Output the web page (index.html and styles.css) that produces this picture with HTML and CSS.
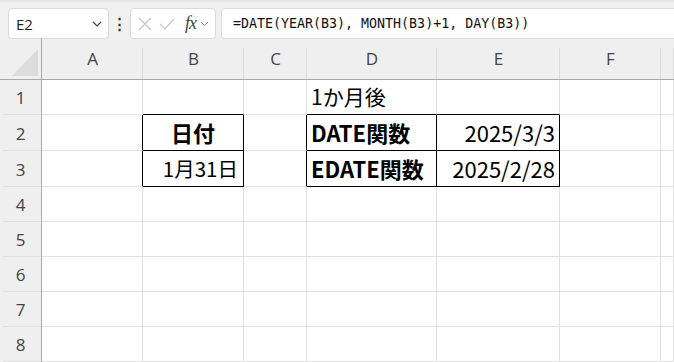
FILE: index.html
```html
<!DOCTYPE html>
<html lang="ja">
<head>
    <meta charset="UTF-8">
    <title>1か月後 - Excel</title>
    <link rel="stylesheet" href="styles.css">
</head>
<body>

    <!-- barra de fórmulas -->
    <div class="barra">
        <div class="nome">
            <span>E2</span>
            <svg class="seta" width="10" height="6" viewBox="0 0 10 6"><path d="M1 1 L5 5 L9 1" fill="none" stroke="#444" stroke-width="1.2"/></svg>
        </div>
        <div class="pontos">&#8942;</div>
        <div class="fx-caixa">
            <svg width="14" height="14" viewBox="0 0 14 14"><path d="M1 1 L13 13 M13 1 L1 13" stroke="#c4c4c4" stroke-width="1.2"/></svg>
            <svg width="16" height="12" viewBox="0 0 16 12"><path d="M1 6 L6 11 L15 1" fill="none" stroke="#c4c4c4" stroke-width="1.2"/></svg>
            <span class="fx">fx</span>
            <svg class="seta" width="9" height="6" viewBox="0 0 9 6"><path d="M1 1 L4.5 4.5 L8 1" fill="none" stroke="#888" stroke-width="1"/></svg>
        </div>
        <div class="formula">=DATE(YEAR(B3), MONTH(B3)+1, DAY(B3))</div>
    </div>

    <!-- planilha -->
    <div class="grade">
        <div class="canto"><div class="triangulo"></div></div>
        <div class="col">A</div>
        <div class="col">B</div>
        <div class="col">C</div>
        <div class="col">D</div>
        <div class="col">E</div>
        <div class="col">F</div>
        <div class="col"></div>

        <div class="lin">1</div>
        <div class="cel"></div>
        <div class="cel bb-k"></div>
        <div class="cel"></div>
        <div class="cel bb-k">1か月後</div>
        <div class="cel bb-k"></div>
        <div class="cel"></div>
        <div class="cel"></div>

        <div class="lin">2</div>
        <div class="cel br-k"></div>
        <div class="cel br-k bb-k negrito centro">日付</div>
        <div class="cel br-k"></div>
        <div class="cel br-k bb-k negrito">DATE関数</div>
        <div class="cel br-k bb-k direita">2025/3/3</div>
        <div class="cel"></div>
        <div class="cel"></div>

        <div class="lin">3</div>
        <div class="cel br-k"></div>
        <div class="cel br-k bb-k direita data">1月31日</div>
        <div class="cel br-k"></div>
        <div class="cel br-k bb-k negrito">EDATE関数</div>
        <div class="cel br-k bb-k direita">2025/2/28</div>
        <div class="cel"></div>
        <div class="cel"></div>

        <div class="lin">4</div>
        <div class="cel"></div><div class="cel"></div><div class="cel"></div><div class="cel"></div><div class="cel"></div><div class="cel"></div><div class="cel"></div>
        <div class="lin">5</div>
        <div class="cel"></div><div class="cel"></div><div class="cel"></div><div class="cel"></div><div class="cel"></div><div class="cel"></div><div class="cel"></div>
        <div class="lin">6</div>
        <div class="cel"></div><div class="cel"></div><div class="cel"></div><div class="cel"></div><div class="cel"></div><div class="cel"></div><div class="cel"></div>
        <div class="lin">7</div>
        <div class="cel"></div><div class="cel"></div><div class="cel"></div><div class="cel"></div><div class="cel"></div><div class="cel"></div><div class="cel"></div>
        <div class="lin">8</div>
        <div class="cel"></div><div class="cel"></div><div class="cel"></div><div class="cel"></div><div class="cel"></div><div class="cel"></div><div class="cel"></div>
    </div>

</body>
</html>
```

FILE: styles.css
```css
body {
    margin: 0;
    background-color: #f0f0f0;
    font-family: "Open Sans", "Noto Sans", sans-serif;
    overflow: hidden;
    width: 674px;
    height: 362px;
}
/* barra de fórmulas */
.barra {
    height: 39px;
    box-sizing: border-box;
    padding: 8px 0 0 8px;
    display: flex;
    align-items: flex-start;
    background: linear-gradient(#e4e4e4, #f0f0f0 3px);
}
.nome, .fx-caixa, .formula {
    height: 31px;
    box-sizing: border-box;
    background-color: #fff;
    border: 1px solid #dadada;
    border-radius: 4px;
    display: flex;
    align-items: center;
}
.nome {
    width: 101px;
    padding: 0 6px 0 7px;
    justify-content: space-between;
    font-size: 15px;
    color: #222;
}
.pontos {
    width: 21px;
    text-align: center;
    font-size: 15px;
    font-weight: bold;
    line-height: 30px;
    color: #333;
}
.fx-caixa {
    width: 86px;
    padding: 0 4px 0 7px;
    gap: 7px;
}
.fx {
    font-family: "Liberation Serif", serif;
    font-style: italic;
    font-size: 18px;
    color: #444;
    margin-left: 3px;
    margin-right: -3px;
    letter-spacing: -1px;
}
.formula {
    flex: 1;
    margin-left: 5px;
    margin-right: -10px;
    padding-left: 11px;
    font-family: "DejaVu Sans Mono", monospace;
    font-size: 13.3px;
    color: #111;
}
/* grade */
.grade {
    display: grid;
    grid-template-columns: 42px 101px 101px 63px 130px 123px 101px 1fr;
    grid-template-rows: 41px 35px 36px 36px 35px 35px 35px 35px 35px;
    background-color: #fff;
}
.canto {
    background-color: #efefef;
    border-right: 1px solid #a8a8a8;
    border-bottom: 1px solid #a8a8a8;
    display: flex;
    align-items: flex-end;
    justify-content: flex-end;
    padding: 0 3px 3px 0;
}
.triangulo {
    width: 0;
    height: 0;
    border-left: 26px solid transparent;
    border-bottom: 27px solid #dcdcdc;
}
.col {
    background: linear-gradient(#dadada, #dadada) right bottom / 1px 31px no-repeat, #efefef;
    border-bottom: 1px solid #a8a8a8;
    display: flex;
    align-items: center;
    justify-content: center;
    padding-bottom: 1px;
    font-size: 17px;
    color: #444;
}
.lin {
    background: linear-gradient(#e2e2e2, #e2e2e2) left 3px bottom / 38px 1px no-repeat, #efefef;
    border-right: 1px solid #a8a8a8;
    display: flex;
    align-items: center;
    justify-content: center;
    font-size: 17px;
    color: #444;
}
.cel {
    border-right: 1px solid #e1e1e1;
    border-bottom: 1px solid #e1e1e1;
    display: flex;
    align-items: center;
    padding: 0 4px 2px 4px;
    font-family: "Noto Sans CJK JP", sans-serif;
    font-size: 21px;
    color: #000;
    white-space: nowrap;
    overflow: hidden;
}
.br-k {
    border-right-color: #000;
}
.bb-k {
    border-bottom-color: #000;
}
.negrito {
    font-weight: bold;
    font-size: 22px;
}
.direita {
    justify-content: flex-end;
    font-size: 22px;
}
.direita.data {
    font-size: 20.5px;
    padding-right: 5px;
}
.centro {
    justify-content: center;
}
```
